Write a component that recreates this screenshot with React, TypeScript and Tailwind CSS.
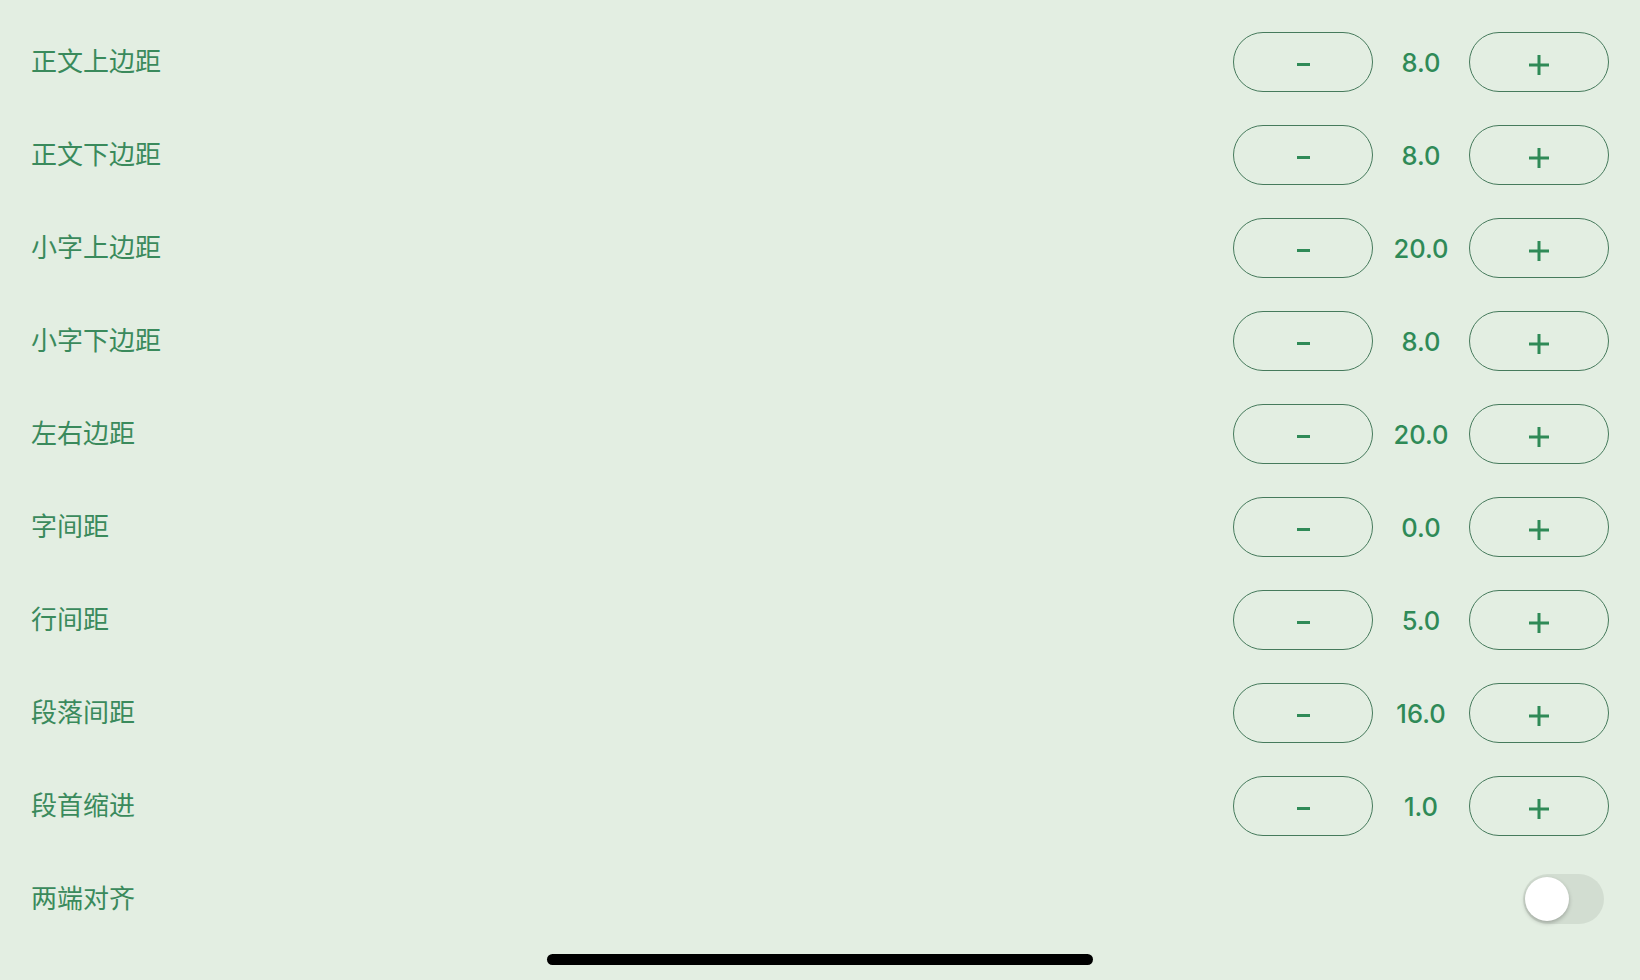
import React, { useState } from 'react';

interface StepRow {
  label: string;
  value: number;
}

const rows: StepRow[] = [
  { label: '正文上边距', value: 8 },
  { label: '正文下边距', value: 8 },
  { label: '小字上边距', value: 20 },
  { label: '小字下边距', value: 8 },
  { label: '左右边距', value: 20 },
  { label: '字间距', value: 0 },
  { label: '行间距', value: 5 },
  { label: '段落间距', value: 16 },
  { label: '段首缩进', value: 1 },
];

const font = "font-['Inter','Noto_Sans_CJK_SC',sans-serif]";

const Stepper = ({ value, onChange }: { value: number; onChange: (v: number) => void }) => (
  <div className="flex items-center">
    <button
      onClick={() => onChange(Math.max(0, value - 1))}
      className="w-[140px] h-[60px] rounded-full border-[1.5px] border-[#467a5c] flex items-center justify-center"
    >
      <span className="block w-[13px] h-[3px] bg-[#2f8a57] mt-[6px]" />
    </button>
    <div className="w-[96px] text-center text-[25.5px] font-medium text-[#2f8a57] leading-none pt-[2px]">
      {value.toFixed(1)}
    </div>
    <button
      onClick={() => onChange(value + 1)}
      className="w-[140px] h-[60px] rounded-full border-[1.5px] border-[#467a5c] flex items-center justify-center"
    >
      <svg width="22" height="22" viewBox="0 0 22 22" className="mt-[6px]">
        <path d="M11 1v20M1 11h20" stroke="#2f8a57" strokeWidth="3" />
      </svg>
    </button>
  </div>
);

export default function App() {
  const [values, setValues] = useState(rows.map((r) => r.value));
  const [justify, setJustify] = useState(false);

  return (
    <div className={`relative w-[1640px] h-[980px] bg-[#e3eee2] overflow-hidden ${font}`}>
      <div className="pt-[15px] pl-[31px] pr-[31px]">
        {rows.map((row, i) => (
          <div key={row.label} className="h-[93px] flex items-center justify-between">
            <span className="text-[26px] text-[#3a8a5c] leading-none">{row.label}</span>
            <Stepper
              value={values[i]}
              onChange={(v) => setValues(values.map((old, j) => (j === i ? v : old)))}
            />
          </div>
        ))}
        <div className="h-[93px] flex items-center justify-between">
          <span className="text-[26px] text-[#3a8a5c] leading-none">两端对齐</span>
          <button
            onClick={() => setJustify(!justify)}
            className={`relative w-[81px] h-[50px] rounded-full mr-[5px] ${justify ? 'bg-[#3a8a5c]' : 'bg-[#d2ddd1]'}`}
          >
            <span
              className={`absolute top-[3px] w-[44px] h-[44px] rounded-full bg-white shadow-[0_2px_4px_rgba(0,0,0,0.25)] ${justify ? 'left-[34px]' : 'left-[2px]'}`}
            />
          </button>
        </div>
      </div>

      {/* home indicator */}
      <div className="absolute left-[547px] top-[954px] w-[546px] h-[11px] rounded-full bg-black" />
    </div>
  );
}
